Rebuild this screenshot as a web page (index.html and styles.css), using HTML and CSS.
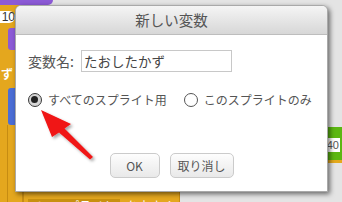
FILE: index.html
```html
<!DOCTYPE html>
<html lang="ja">
<head>
<meta charset="utf-8">
<title>新しい変数</title>
<link rel="stylesheet" href="styles.css">
</head>
<body>
<div class="canvas">
  <div class="blk purple-top"></div>
  <div class="blk orange-col"></div>
  <div class="blk pill">10</div>
  <div class="blk purple-in"></div>
  <div class="blk label-zu">ず -</div>
  <div class="blk blue-in"></div>
  <div class="blk edge"></div>
  <div class="blk bottom-blk"><span class="dd">このスプライト ▾</span><span class="bt">を小さくする</span></div>
  <div class="blk green-blk"><span class="num">40</span></div>
</div>
<div class="dialog">
  <div class="title">新しい変数</div>
  <div class="body">
    <div class="name-row">
      <span class="lbl">変数名:</span>
      <div class="input">たおしたかず</div>
    </div>
    <div class="radio-row">
      <span class="opt"><span class="radio on"></span>すべてのスプライト用</span>
      <span class="opt second"><span class="radio"></span>このスプライトのみ</span>
    </div>
    <div class="buttons">
      <button class="btn ok">OK</button>
      <button class="btn cancel">取り消し</button>
    </div>
  </div>
</div>
<svg class="arrow" width="342" height="202" viewBox="0 0 342 202">
  <defs>
    <filter id="sh" x="-30%" y="-30%" width="160%" height="160%">
      <feDropShadow dx="2" dy="2" stdDeviation="1.6" flood-color="#000" flood-opacity="0.35"/>
    </filter>
  </defs>
  <polygon points="41,110 71,124 64.5,128.5 93,157 90,159.5 59,132.5 52,137" fill="#f01414" filter="url(#sh)"/>
</svg>
</body>
</html>
```

FILE: styles.css
```css
* { box-sizing: border-box; }
html, body { margin: 0; padding: 0; }
body {
  width: 342px;
  height: 202px;
  overflow: hidden;
  position: relative;
  background: #e4e4e4;
  font-family: "Liberation Sans", "Noto Sans CJK JP", sans-serif;
}
.canvas { position: absolute; left: 0; top: 0; width: 342px; height: 202px; overflow: hidden; }
.blk { position: absolute; }
.purple-top { left: 0; top: 0; width: 53px; height: 5px; background: #8c5ad6; border-radius: 0 0 5px 0; }
.orange-col { left: 0; top: 5px; width: 24px; height: 197px; background: #e4a71e; }
.pill {
  left: 0; top: 11px; width: 15px; height: 12px;
  background: #fff; border-radius: 0 6px 6px 0;
  font-size: 12px; line-height: 12px; color: #333;
  text-align: right; padding-right: 0;
}
.purple-in { left: 8px; top: 28px; width: 14px; height: 22px; background: #8c5ad6; border-radius: 3px 0 0 3px; }
.label-zu { left: 1px; top: 67px; color: #fff; font-size: 12px; font-weight: bold; line-height: 16px; white-space: nowrap; }
.blue-in { left: 8px; top: 88px; width: 14px; height: 37px; background: #4b6dd5; border-radius: 3px 0 0 3px; }
.edge { left: 7px; top: 125px; width: 1px; height: 77px; background: #c68c12; }
.bottom-blk {
  left: 22px; top: 192px; width: 158px; height: 10px; overflow: hidden;
  background: #e4a71e; border-left: 2px solid #c68c12; border-right: 1px solid #c68c12;
  display: flex; align-items: flex-start; padding: 7px 0 0 4px; gap: 6px;
  color: #fff; font-size: 12px; line-height: 14px; white-space: nowrap;
  font-family: "Noto Sans CJK JP", sans-serif;
}
.bottom-blk .dd { background: #c8900f; width: 92px; padding-left: 3px; }
.green-blk {
  left: 322px; top: 127px; width: 20px; height: 36px;
  background: #5cb712; border-bottom: 3px solid #e3a91c;
}
.green-blk .num {
  position: absolute; left: 4px; top: 11px; width: 14px; height: 14px;
  background: #fff; color: #555; font-size: 11px; line-height: 14px; text-align: right; padding-right: 1px;
}

.dialog {
  position: absolute; left: 15px; top: 5px; width: 313px; height: 187px;
  background: #fff; border: 1px solid #a9a9a9; border-radius: 6px 6px 0 0;
  box-shadow: 2px 2px 5px rgba(0, 0, 0, 0.55);
  display: flex; flex-direction: column;
}
.title {
  height: 29px; flex: none;
  background: linear-gradient(#f5f5f5, #d7d7d7);
  border-bottom: 1px solid #bdbdbd; border-radius: 5px 5px 0 0;
  text-align: center; font-size: 14.5px; line-height: 28px; color: #555;
  font-family: "Noto Sans CJK JP", sans-serif;
}
.body { flex: 1; display: flex; flex-direction: column; padding: 15px 12px 0 12px; color: #555; }
.name-row { display: flex; align-items: center; height: 22px; gap: 7px; }
.lbl { font-size: 14px; font-family: "Noto Sans CJK JP", sans-serif; }
.input {
  width: 151px; height: 22px; border: 1px solid #c8c8c8; padding-left: 2px;
  font-family: "Noto Sans CJK JP", sans-serif; font-size: 13.5px; line-height: 20px; color: #444;
}
.radio-row { display: flex; align-items: center; height: 15px; margin-top: 20px; font-size: 12px; font-family: "Noto Sans CJK JP", sans-serif; }
.opt { display: flex; align-items: center; gap: 6px; }
.opt.second { margin-left: 17px; }
.radio {
  width: 14px; height: 14px; border-radius: 50%;
  border: 1.3px solid #555; background: #fff; position: relative;
}
.radio.on { border: 1.6px solid #3a3a3a; background: #d6d6d6; }
.radio.on::after {
  content: ""; position: absolute; left: 2px; top: 2px; width: 7px; height: 7px;
  border-radius: 50%; background: #222;
}
.buttons { display: flex; justify-content: center; gap: 10px; margin-top: 46px; }
.btn {
  height: 25px; padding: 0; margin: 0;
  border: 1px solid #cbcbcb; border-radius: 5px;
  background: linear-gradient(#fdfdfd, #e9e9e9);
  color: #555; font-size: 12px; font-family: "Noto Sans CJK JP", sans-serif;
}
.btn.ok { width: 50px; }
.btn.cancel { width: 64px; }
.arrow { position: absolute; left: 0; top: 0; }
```
